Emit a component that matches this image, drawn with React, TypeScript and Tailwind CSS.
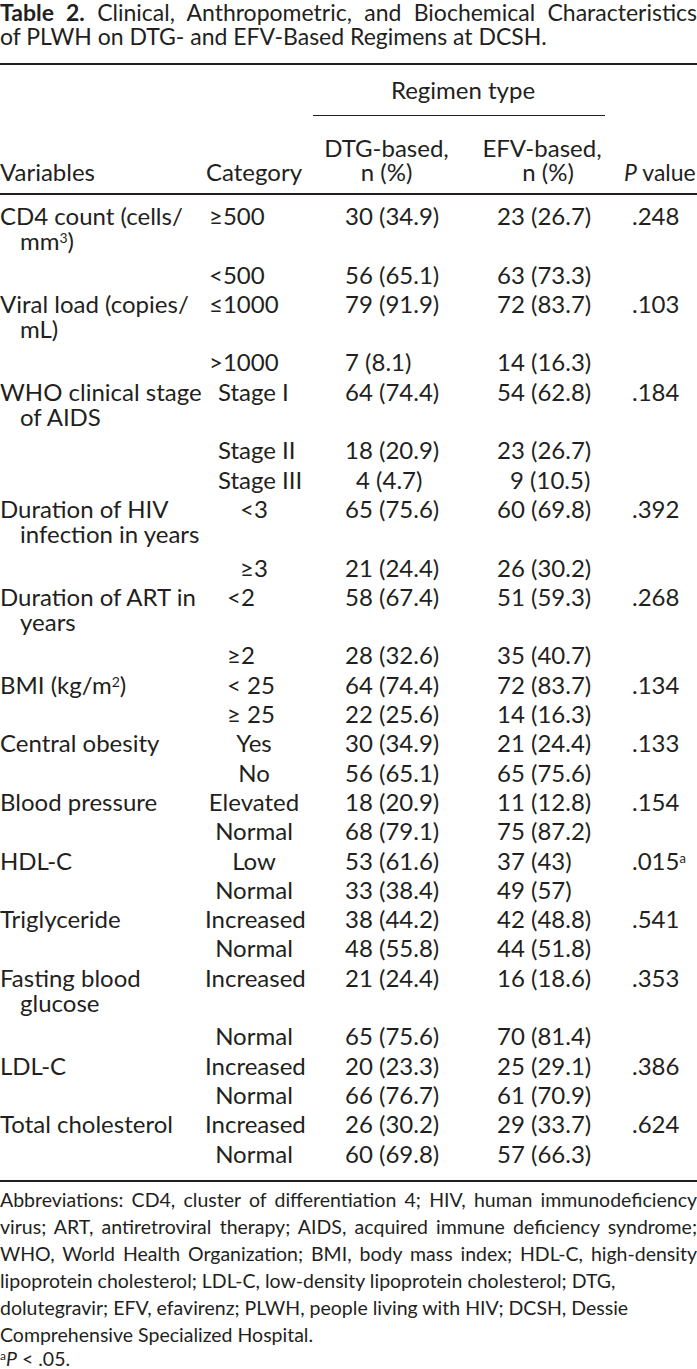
import React from "react";

type Row = {
  v?: React.ReactNode[];
  c: string;
  ca: string;
  d: string;
  dp?: string;
  e: string;
  ep?: string;
  p?: React.ReactNode;
};

const L4 = "pl-[4px]";
const L13 = "pl-[13px]";
const L22 = "pl-[22px]";
const C = "text-center";

const rows: Row[] = [
  { v: ["CD4 count (cells/", <>mm<sup className="text-[14px]">3</sup>)</>], c: "≥500", ca: L4, d: "30 (34.9)", e: "23 (26.7)", p: ".248" },
  { c: "<500", ca: L4, d: "56 (65.1)", e: "63 (73.3)" },
  { v: ["Viral load (copies/", "mL)"], c: "≤1000", ca: L4, d: "79 (91.9)", e: "72 (83.7)", p: ".103" },
  { c: ">1000", ca: L4, d: "7 (8.1)", e: "14 (16.3)" },
  { v: ["WHO clinical stage", "of AIDS"], c: "Stage I", ca: L13, d: "64 (74.4)", e: "54 (62.8)", p: ".184" },
  { c: "Stage II", ca: L13, d: "18 (20.9)", e: "23 (26.7)" },
  { c: "Stage III", ca: L13, d: "4 (4.7)", dp: "pl-[53px]", e: "9 (10.5)", ep: "pl-[40px]" },
  { v: ["Duration of HIV", "infection in years"], c: "<3", ca: C, d: "65 (75.6)", e: "60 (69.8)", p: ".392" },
  { c: "≥3", ca: C, d: "21 (24.4)", e: "26 (30.2)" },
  { v: ["Duration of ART in", "years"], c: "<2", ca: L22, d: "58 (67.4)", e: "51 (59.3)", p: ".268" },
  { c: "≥2", ca: L22, d: "28 (32.6)", e: "35 (40.7)" },
  { v: [<>BMI (kg/m<sup className="text-[14px]">2</sup>)</>], c: "< 25", ca: L22, d: "64 (74.4)", e: "72 (83.7)", p: ".134" },
  { c: "≥ 25", ca: L22, d: "22 (25.6)", e: "14 (16.3)" },
  { v: ["Central obesity"], c: "Yes", ca: C, d: "30 (34.9)", e: "21 (24.4)", p: ".133" },
  { c: "No", ca: C, d: "56 (65.1)", e: "65 (75.6)" },
  { v: ["Blood pressure"], c: "Elevated", ca: C, d: "18 (20.9)", e: "11 (12.8)", p: ".154" },
  { c: "Normal", ca: C, d: "68 (79.1)", e: "75 (87.2)" },
  { v: ["HDL-C"], c: "Low", ca: C, d: "53 (61.6)", e: "37 (43)", p: <>.015<sup className="text-[13px]">a</sup></> },
  { c: "Normal", ca: C, d: "33 (38.4)", e: "49 (57)" },
  { v: ["Triglyceride"], c: "Increased", ca: C, d: "38 (44.2)", e: "42 (48.8)", p: ".541" },
  { c: "Normal", ca: C, d: "48 (55.8)", e: "44 (51.8)" },
  { v: ["Fasting blood", "glucose"], c: "Increased", ca: C, d: "21 (24.4)", e: "16 (18.6)", p: ".353" },
  { c: "Normal", ca: C, d: "65 (75.6)", e: "70 (81.4)" },
  { v: ["LDL-C"], c: "Increased", ca: C, d: "20 (23.3)", e: "25 (29.1)", p: ".386" },
  { c: "Normal", ca: C, d: "66 (76.7)", e: "61 (70.9)" },
  { v: ["Total cholesterol"], c: "Increased", ca: C, d: "26 (30.2)", e: "29 (33.7)", p: ".624" },
  { c: "Normal", ca: C, d: "60 (69.8)", e: "57 (66.3)" },
];

const GRID = "grid grid-cols-[205px_98px_167px_152px_75px]";

function BodyRow({ r }: { r: Row }) {
  const wrapped = r.v && r.v.length > 1;
  return (
    <div className={`${GRID} ${wrapped ? "min-h-[58.6px]" : "min-h-[29.3px]"} leading-[29.3px]`}>
      <div className={wrapped ? "pt-[2.15px] leading-[25px]" : ""}>
        {r.v?.map((t, i) => (
          <div key={i} className={i > 0 ? "pl-[20px]" : ""}>
            {t}
          </div>
        ))}
      </div>
      <div className={`whitespace-nowrap ${r.ca}`}>{r.c}</div>
      <div className={`whitespace-nowrap ${r.dp ?? "pl-[42px]"}`}>{r.d}</div>
      <div className={`whitespace-nowrap ${r.ep ?? "pl-[27px]"}`}>{r.e}</div>
      <div className="whitespace-nowrap pl-[10px]">{r.p}</div>
    </div>
  );
}

export default function App() {
  return (
    <div className="w-[697px] bg-white text-[#231f20] [font-family:Lato,'Noto_Sans',sans-serif] text-[24px]">
      {/* Title */}
      <div className="text-[23px] leading-[24px]">
        <div className="text-justify [text-align-last:justify] whitespace-nowrap">
          <span className="font-bold">Table 2.</span> Clinical, Anthropometric, and Biochemical Characteristics
        </div>
        <div className="whitespace-nowrap">of PLWH on DTG- and EFV-Based Regimens at DCSH.</div>
      </div>

      {/* Table */}
      <div className="mt-[15px] border-t-2 border-[#231f20]">
        {/* Header */}
        <div className={`${GRID} leading-[24px]`}>
          <div className="col-start-3 col-span-2 pt-[13px]">
            <div className="ml-[10px] mr-[17px] pb-[13px] text-center border-b-[1.5px] border-[#231f20]">
              <span className="relative left-[4px]">Regimen type</span>
            </div>
          </div>
        </div>
        <div className={`${GRID} leading-[24px] pt-[20px] pb-[9px] border-b-2 border-[#231f20]`}>
          <div className="self-end">Variables</div>
          <div className="self-end text-center">Category</div>
          <div className="text-center">
            <div>DTG-based,</div>
            <div>n (%)</div>
          </div>
          <div className="text-center">
            <div className="relative left-[-4px]">EFV-based,</div>
            <div className="relative left-[2px]">n (%)</div>
          </div>
          <div className="self-end whitespace-nowrap text-[23px] pl-[2px]">
            <i>P</i> value
          </div>
        </div>

        {/* Body */}
        <div className="pt-[6px] pb-[12px] border-b-[2.5px] border-[#231f20]">
          {rows.map((r, i) => (
            <BodyRow key={i} r={r} />
          ))}
        </div>
      </div>

      {/* Footnote */}
      <div className="pt-[4px] text-[19.5px] leading-[27px]">
        <div className="text-justify [text-align-last:justify] whitespace-nowrap">
          Abbreviations: CD4, cluster of differentiation 4; HIV, human immunodeficiency
        </div>
        <div className="text-justify [text-align-last:justify] whitespace-nowrap">
          virus; ART, antiretroviral therapy; AIDS, acquired immune deficiency syndrome;
        </div>
        <div className="text-justify [text-align-last:justify] whitespace-nowrap">
          WHO, World Health Organization; BMI, body mass index; HDL-C, high-density
        </div>
        <div className="whitespace-nowrap">
          lipoprotein cholesterol; LDL-C, low-density lipoprotein cholesterol; DTG,
        </div>
        <div className="whitespace-nowrap">
          dolutegravir; EFV, efavirenz; PLWH, people living with HIV; DCSH, Dessie
        </div>
        <div className="whitespace-nowrap">Comprehensive Specialized Hospital.</div>
        <div className="whitespace-nowrap leading-[22px]">
          <sup className="text-[12px]">a</sup>
          <i>P</i> &lt; .05.
        </div>
      </div>
    </div>
  );
}
